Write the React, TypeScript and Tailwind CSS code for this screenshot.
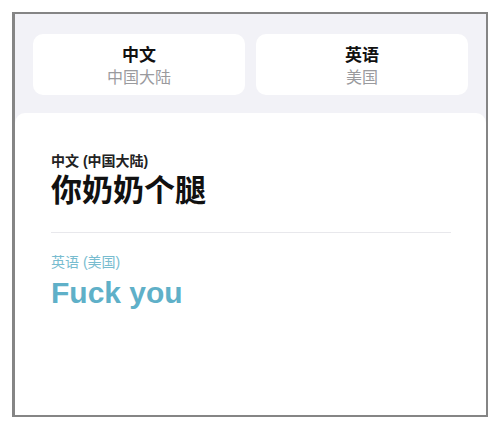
const cjk = { fontFamily: '"Liberation Sans", "Noto Sans CJK SC", sans-serif' };

function LangButton({ name, region }: { name: string; region: string }) {
  return (
    <div className="flex h-[61px] flex-1 flex-col items-center justify-center rounded-[10px] bg-white pt-[2px]">
      <div className="text-[17px] font-bold leading-[23px] text-[#111]">{name}</div>
      <div className="text-[16px] leading-[21px] text-[#9a9a9e]">{region}</div>
    </div>
  );
}

export default function App() {
  return (
    <div className="h-[430px] w-[500px] bg-white pl-[12px] pt-[12px]" style={cjk}>
      <div className="flex h-[405px] w-[476px] flex-col border-2 border-l-[3px] border-[#858585] bg-[#f2f2f7]">
        {/* language picker */}
        <div className="flex gap-[11px] px-[18px] pt-[20px]">
          <LangButton name="中文" region="中国大陆" />
          <LangButton name="英语" region="美国" />
        </div>

        {/* translation card */}
        <div className="mt-[18px] flex-1 rounded-t-[10px] bg-white pl-[36px] pr-[35px] pt-[38px]">
          <div className="text-[14px] font-semibold leading-[20px] text-[#222]">中文 (中国大陆)</div>
          <div className="mt-[2px] text-[31px] font-bold leading-[36px] text-[#111]">你奶奶个腿</div>
          <div className="mt-[23px] h-px bg-[#e8e8ec]" />
          <div className="mt-[19px] text-[14px] leading-[20px] text-[#78bccf]">英语 (美国)</div>
          <div className="mt-[3px] text-[30px] font-bold leading-[36px] text-[#5fb0c8]">Fuck you</div>
        </div>
      </div>
    </div>
  );
}
